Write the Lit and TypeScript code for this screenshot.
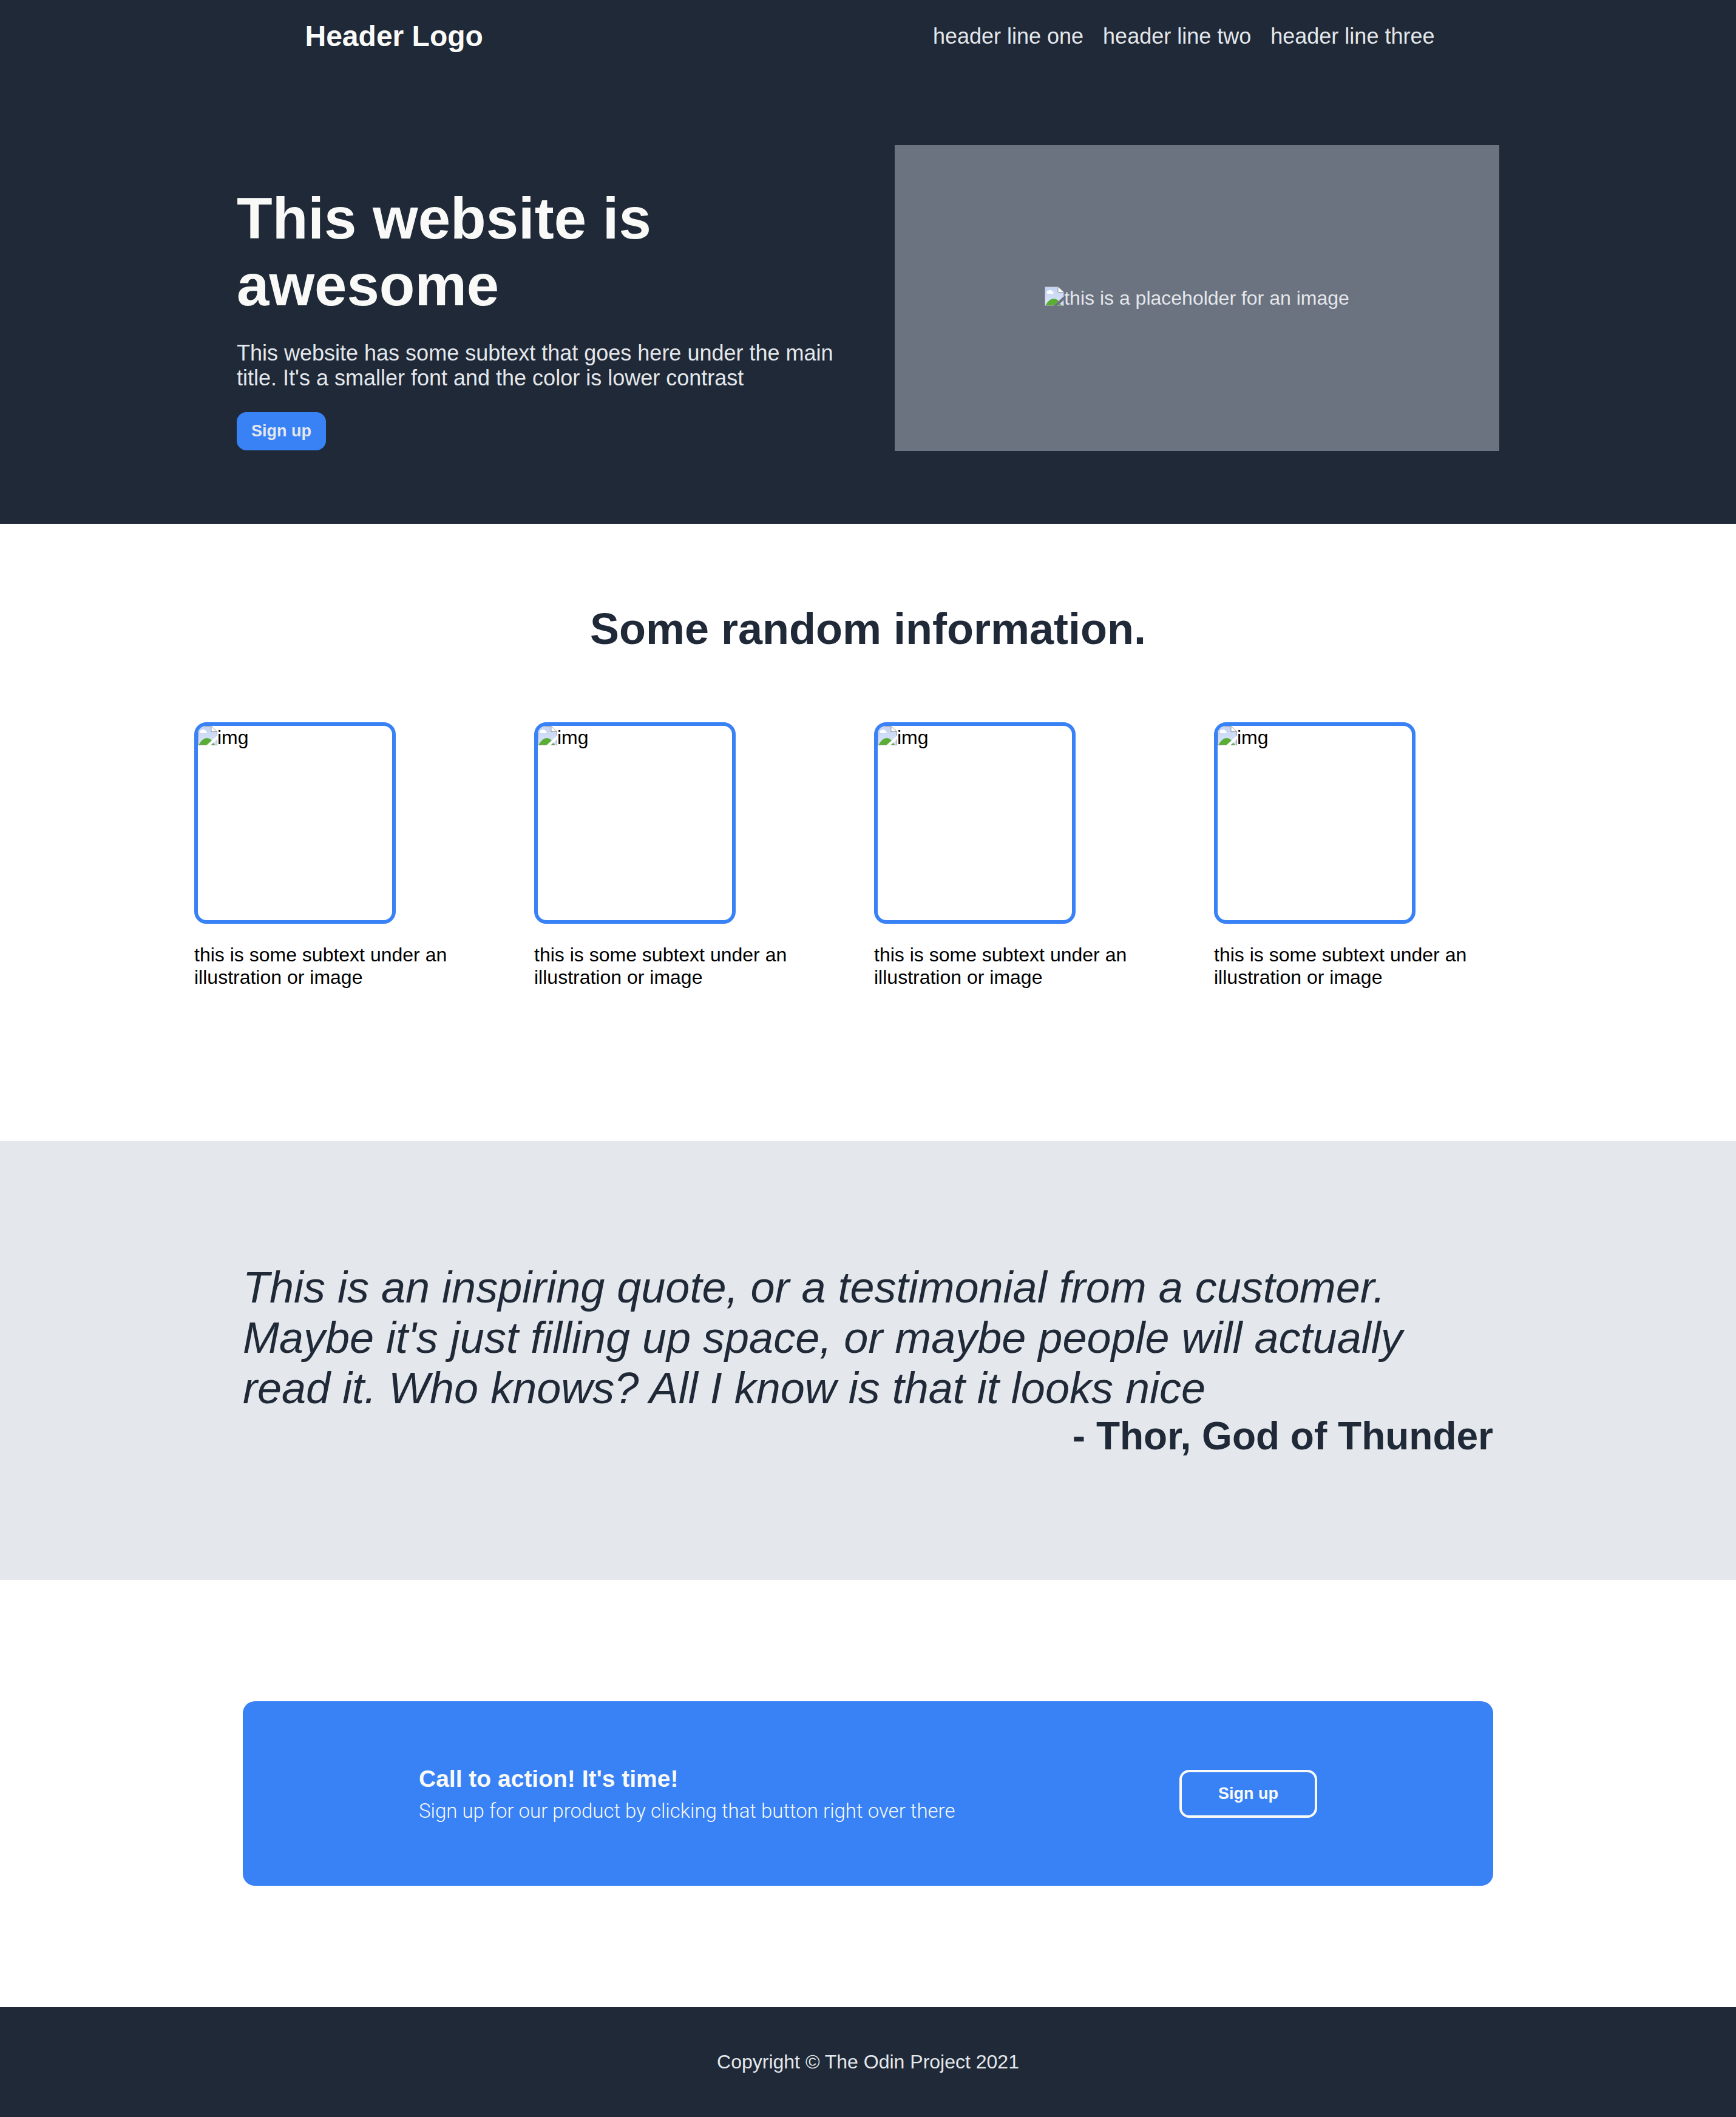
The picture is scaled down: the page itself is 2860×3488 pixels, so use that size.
import { LitElement, html, css, svg } from "lit";
import { customElement, property } from "lit/decorators.js";

const pageIcon = svg`
  <defs>
    <linearGradient id="sky" x1="0" y1="0" x2="0" y2="1">
      <stop offset="0" stop-color="#c3d3f3" />
      <stop offset="1" stop-color="#dbe5fa" />
    </linearGradient>
    <clipPath id="upper"><path d="M0 0H22L32 9V16L14 32H0Z" /></clipPath>
    <clipPath id="lower"><path d="M32 22V32H21Z" /></clipPath>
  </defs>
  <g clip-path="url(#upper)">
    <path d="M0 0H22L32 9V32H0Z" fill="url(#sky)" />
    <path d="M5 12A3 3 0 0 1 5 7Q6 7 6 7.500A4 4 0 0 1 13 8.500A2 2 0 0 1 14 12Z" fill="#fff" />
    <path d="M1 32Q7 20 15 20T27 32Z" fill="#5aae35" />
    <path d="M0 31.500H14M0.500 0V32M0 0.500H22M31.500 9V16" fill="none" stroke="#9a9a9a" />
    <path d="M22 0.500V9.500H32Z" fill="#fff" stroke="#9a9a9a" />
  </g>
  <g clip-path="url(#lower)">
    <path d="M20 20H32V32H20Z" fill="url(#sky)" />
    <path d="M20 32V24Q25 26 29 32Z" fill="#5aae35" />
    <path d="M20 31.500H31.500V20" fill="none" stroke="#9a9a9a" />
  </g>
`;

/** Missing-picture glyph followed by its alternative text. */
@customElement("missing-picture")
export class MissingPicture extends LitElement {
  @property() label = "";

  static styles = css`
    :host {
      display: flex;
      align-items: flex-start;
      font-size: 32px;
      line-height: 38px;
    }
    .icon {
      flex: none;
      width: 32px;
      height: 32px;
    }
  `;

  render() {
    return html`<svg class="icon" viewBox="0 0 32 32" aria-hidden="true">${pageIcon}</svg><span>${this.label}</span>`;
  }
}

@customElement("app-root")
export class AppRoot extends LitElement {
  private links = ["header line one", "header line two", "header line three"];
  private cards = Array.from({ length: 4 }, () => "this is some subtext under an illustration or image");

  static styles = css`
    :host {
      --dark: #1f2937;
      --blue: #3882f6;
      --light: #e4e7eb;
      --bright: #f9faf8;
      display: block;
      background: #fff;
      color: #000;
      font-family: "Liberation Sans", Arial, sans-serif;
      font-size: 32px;
      line-height: 37px;
    }
    * {
      box-sizing: border-box;
    }
    h1, h2, p, ul, blockquote, figure {
      margin: 0;
      padding: 0;
    }
    .top {
      background: var(--dark);
      color: var(--light);
    }
    .header {
      display: flex;
      justify-content: space-around;
      align-items: center;
      padding: 32px 126px 32px 132px;
    }
    .logo {
      color: var(--bright);
      font-size: 48px;
      font-weight: 700;
      line-height: 55px;
    }
    .links {
      display: flex;
      gap: 32px;
      list-style: none;
      font-size: 36px;
      line-height: 41px;
    }
    .link {
      color: inherit;
      text-decoration: none;
    }
    .hero {
      display: grid;
      grid-template-columns: 1fr 1fr;
      gap: 88px;
      max-width: 2320px;
      margin: 0 auto;
      padding: 120px;
    }
    .intro {
      display: flex;
      flex-direction: column;
      align-items: flex-start;
      justify-content: flex-end;
      gap: 36px;
      padding-bottom: 1px;
    }
    .title {
      color: var(--bright);
      font-size: 96px;
      line-height: 110px;
    }
    .lead {
      font-size: 36px;
      line-height: 41px;
    }
    .button {
      border: 0;
      border-radius: 16px;
      padding: 16px 24px;
      background: var(--blue);
      color: var(--light);
      font-family: inherit;
      font-size: 27px;
      font-weight: 700;
      line-height: 31px;
    }
    .placeholder {
      display: flex;
      align-items: center;
      justify-content: center;
      min-height: 504px;
      background: #6b7280;
    }
    .info {
      max-width: 2220px;
      margin: 0 auto;
      padding: 132px 0 251px;
    }
    .heading {
      color: var(--dark);
      font-size: 72px;
      line-height: 83px;
      text-align: center;
    }
    .cards {
      display: grid;
      grid-template-columns: repeat(4, 1fr);
      gap: 20px;
      margin-top: 112px;
    }
    .card {
      display: flex;
      flex-direction: column;
      gap: 33px;
    }
    .frame {
      width: 332px;
      height: 332px;
      border: 6px solid var(--blue);
      border-radius: 20px;
      overflow: hidden;
    }
    .quote {
      padding: 200px 0;
      background: var(--light);
      color: var(--dark);
    }
    .inner {
      max-width: 2060px;
      margin: 0 auto;
    }
    .words {
      font-size: 72px;
      font-style: italic;
      font-weight: 300;
      line-height: 83px;
    }
    .author {
      font-size: 64px;
      font-weight: 700;
      line-height: 74px;
      text-align: right;
    }
    .action {
      padding: 200px 0;
    }
    .banner {
      display: flex;
      align-items: center;
      justify-content: space-between;
      padding: 105px 290px;
      border-radius: 20px;
      background: var(--blue);
      color: var(--bright);
    }
    .pitch {
      display: flex;
      flex-direction: column;
      gap: 12px;
    }
    .call {
      font-size: 39px;
      line-height: 45px;
    }
    .detail {
      font-family: Roboto, "Liberation Sans", sans-serif;
      font-size: 33px;
      font-weight: 300;
    }
    .outlined {
      border: 4px solid var(--bright);
      padding: 20px 60px;
      color: var(--bright);
    }
    .footer {
      padding: 72px;
      background: var(--dark);
      color: var(--light);
      text-align: center;
    }
  `;

  render() {
    return html`
      <div class="top">
        <header class="header">
          <div class="logo">Header Logo</div>
          <nav>
            <ul class="links">
              ${this.links.map((text) => html`<li><a class="link" href="#">${text}</a></li>`)}
            </ul>
          </nav>
        </header>
        <section class="hero">
          <div class="intro">
            <h1 class="title">This website is awesome</h1>
            <p class="lead">
              This website has some subtext that goes here under the main title. It's a smaller font and the color is
              lower contrast
            </p>
            <button class="button" type="button">Sign up</button>
          </div>
          <div class="placeholder">
            <missing-picture label="this is a placeholder for an image"></missing-picture>
          </div>
        </section>
      </div>
      <section class="info">
        <h2 class="heading">Some random information.</h2>
        <div class="cards">
          ${this.cards.map(
            (text) => html`
              <figure class="card">
                <div class="frame"><missing-picture label="img"></missing-picture></div>
                <figcaption>${text}</figcaption>
              </figure>
            `,
          )}
        </div>
      </section>
      <section class="quote">
        <div class="inner">
          <blockquote class="words">
            This is an inspiring quote, or a testimonial from a customer. Maybe it's just filling up space, or maybe
            people will actually read it. Who knows? All I know is that it looks nice
          </blockquote>
          <p class="author">- Thor, God of Thunder</p>
        </div>
      </section>
      <section class="action">
        <div class="inner banner">
          <div class="pitch">
            <h2 class="call">Call to action! It's time!</h2>
            <p class="detail">Sign up for our product by clicking that button right over there</p>
          </div>
          <button class="button outlined" type="button">Sign up</button>
        </div>
      </section>
      <footer class="footer">Copyright © The Odin Project 2021</footer>
    `;
  }
}
